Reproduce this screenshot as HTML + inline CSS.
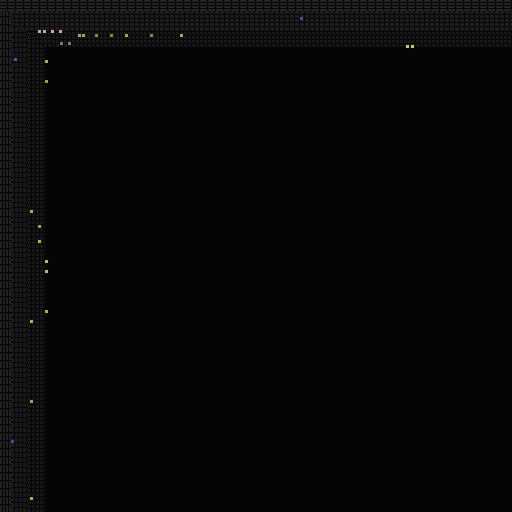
<!DOCTYPE html>
<html><head><style>
html,body{margin:0;padding:0;background:#050505;width:512px;height:512px;overflow:hidden;position:relative}
.b{position:absolute}
.c{position:absolute;width:3px;height:3px}
</style></head><body>
<div class="b" style="left:0;top:0;width:512px;height:11px;background:
repeating-linear-gradient(90deg,transparent 0 7px,#060606 7px 8px),
repeating-linear-gradient(0deg,transparent 0 2px,#060606 2px 3px),#222"></div>
<div class="b" style="left:10px;top:11px;width:502px;height:19px;background:
repeating-linear-gradient(90deg,transparent 0 4px,#060606 4px 5px),
repeating-linear-gradient(0deg,transparent 0 3px,#060606 3px 4px),#1d1d1d"></div>
<div class="b" style="left:28px;top:30px;width:484px;height:17px;background:
repeating-linear-gradient(90deg,transparent 0 3px,#060606 3px 4px),
repeating-linear-gradient(0deg,transparent 0 3px,#060606 3px 4px),#171717"></div>
<div class="b" style="left:0;top:11px;width:11px;height:501px;background:
repeating-linear-gradient(0deg,transparent 0 7px,#060606 7px 8px),
repeating-linear-gradient(90deg,transparent 0 2px,#060606 2px 3px),#202020"></div>
<div class="b" style="left:11px;top:30px;width:17px;height:482px;background:
repeating-linear-gradient(0deg,transparent 0 4px,#060606 4px 5px),
repeating-linear-gradient(90deg,transparent 0 3px,#060606 3px 4px),#1b1b1b"></div>
<div class="b" style="left:28px;top:47px;width:17px;height:465px;background:
repeating-linear-gradient(0deg,transparent 0 3px,#060606 3px 4px),
repeating-linear-gradient(90deg,transparent 0 3px,#060606 3px 4px),#161616"></div>
<div class="c" style="left:38px;top:30px;background:#c9a3a8"></div>
<div class="c" style="left:43px;top:30px;background:#c9a3a8"></div>
<div class="c" style="left:51px;top:30px;background:#c9a3a8"></div>
<div class="c" style="left:59px;top:30px;background:#c9a3a8"></div>
<div class="c" style="left:78px;top:34px;background:#a8a84a"></div>
<div class="c" style="left:82px;top:34px;background:#a8a84a"></div>
<div class="c" style="left:95px;top:34px;background:#8a8a40"></div>
<div class="c" style="left:110px;top:34px;background:#8a8a40"></div>
<div class="c" style="left:125px;top:34px;background:#a8a84a"></div>
<div class="c" style="left:150px;top:34px;background:#8a8a40"></div>
<div class="c" style="left:180px;top:34px;background:#a8a84a"></div>
<div class="c" style="left:60px;top:42px;background:#777"></div>
<div class="c" style="left:68px;top:42px;background:#777"></div>
<div class="c" style="left:406px;top:45px;background:#c8c860"></div>
<div class="c" style="left:411px;top:45px;background:#c8c860"></div>
<div class="c" style="left:300px;top:17px;background:#2a5a9a"></div>
<div class="c" style="left:14px;top:58px;background:#2a6ab0"></div>
<div class="c" style="left:45px;top:60px;background:#b0b040"></div>
<div class="c" style="left:45px;top:80px;background:#a0a040"></div>
<div class="c" style="left:30px;top:210px;background:#b0b040"></div>
<div class="c" style="left:38px;top:225px;background:#a0a040"></div>
<div class="c" style="left:38px;top:240px;background:#b0b040"></div>
<div class="c" style="left:45px;top:260px;background:#c0c050"></div>
<div class="c" style="left:45px;top:270px;background:#c0c050"></div>
<div class="c" style="left:30px;top:320px;background:#b0b040"></div>
<div class="c" style="left:45px;top:310px;background:#b0b040"></div>
<div class="c" style="left:30px;top:400px;background:#a0a040"></div>
<div class="c" style="left:30px;top:497px;background:#b0b040"></div>
<div class="c" style="left:11px;top:440px;background:#2a5a9a"></div>
</body></html>
